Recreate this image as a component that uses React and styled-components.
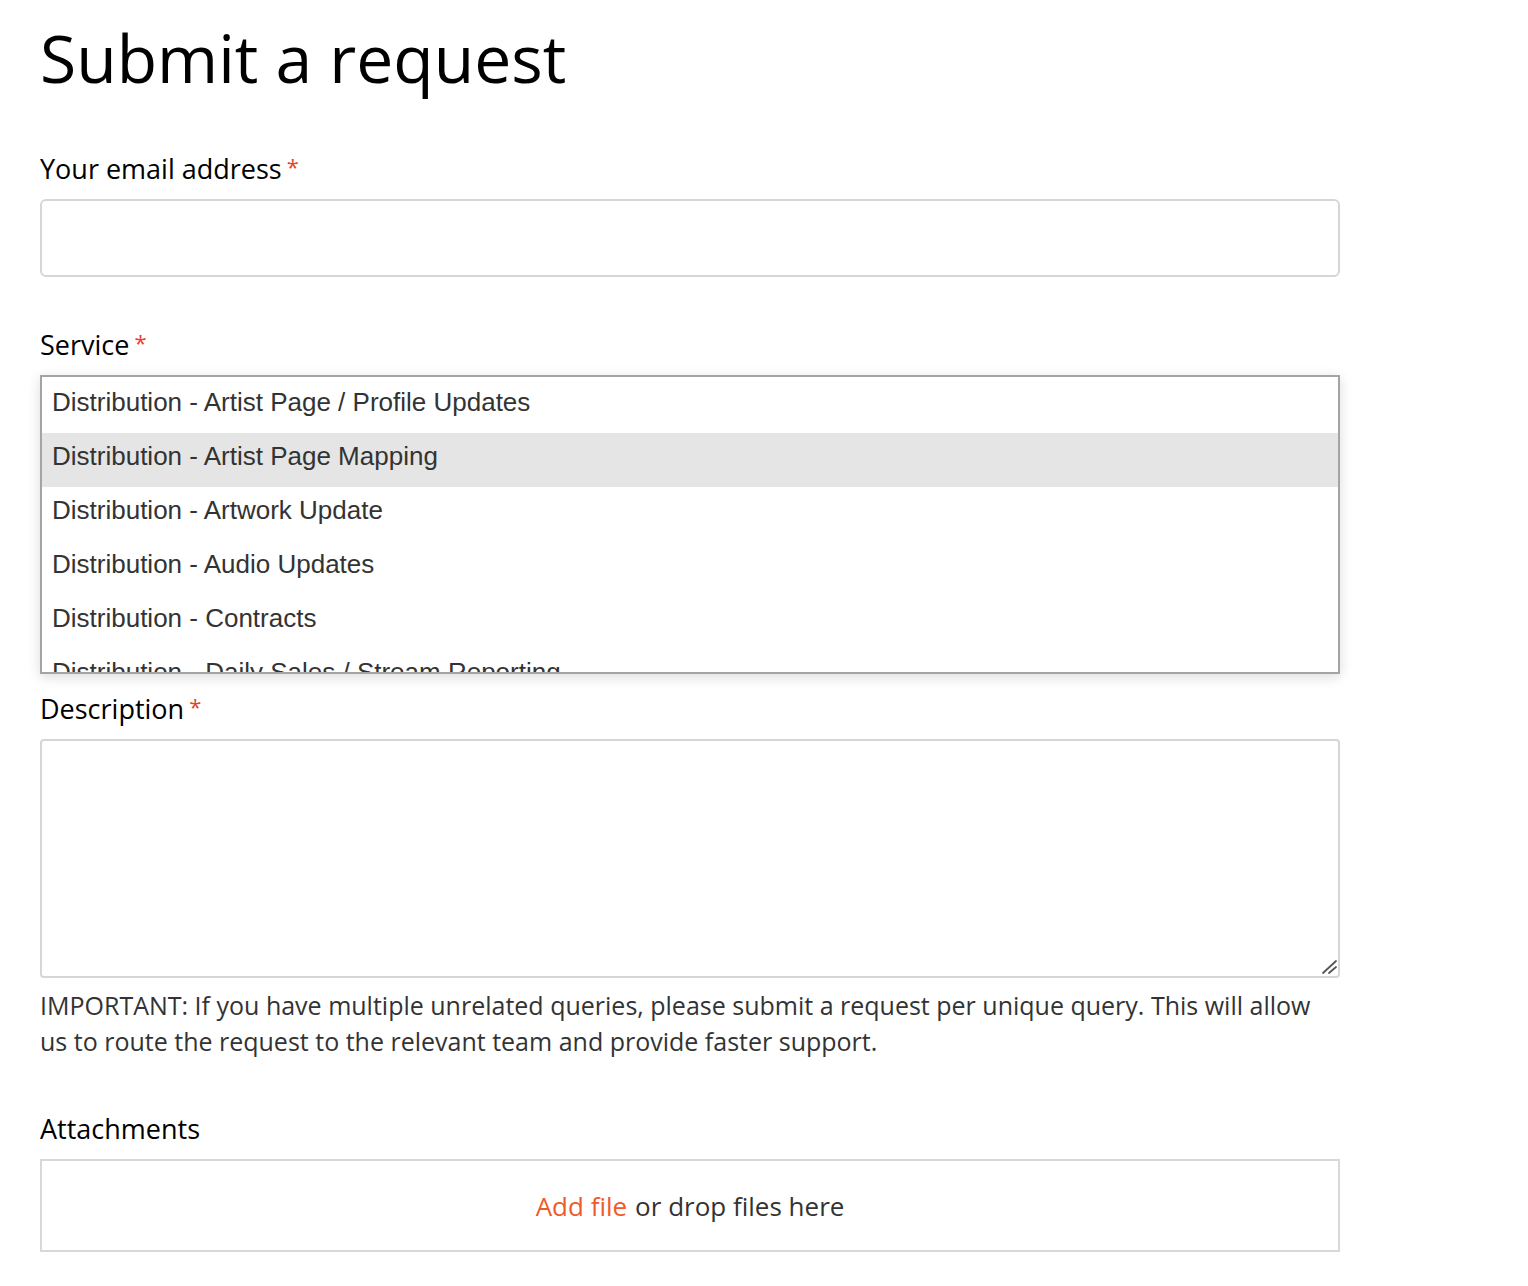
import React from "react";
import styled, { createGlobalStyle } from "styled-components";

const GlobalStyle = createGlobalStyle`
  html, body {
    margin: 0;
    padding: 0;
    background: #ffffff;
  }
  body {
    font-family: "Open Sans", "DejaVu Sans", sans-serif;
    color: #000;
  }
  * { box-sizing: border-box; }
`;

const Page = styled.main`
  padding: 17px 0 40px 40px;
  width: 1340px;
`;

const Title = styled.h1`
  margin: 0 0 51px;
  font-family: "Open Sans", sans-serif;
  font-weight: 400;
  font-size: 66px;
  line-height: 80px;
  color: #000;
`;

const Form = styled.form`
  display: flex;
  flex-direction: column;
  width: 1300px;
`;

const Field = styled.div`
  display: flex;
  flex-direction: column;
  margin-bottom: ${(p) => p.$gap ?? 50}px;
`;

const Label = styled.label`
  display: block;
  font-size: 27px;
  line-height: 36px;
  color: #000;
  margin-bottom: 12px;
`;

const Required = styled.span`
  color: #e8412e;
  font-size: 22px;
  margin-left: 5px;
  vertical-align: 4px;
`;

const TextInput = styled.input`
  display: block;
  width: 100%;
  height: 78px;
  border: 2px solid #d6d6d6;
  border-radius: 6px;
  background: #fff;
  font: inherit;
  font-size: 26px;
  padding: 0 16px;
  outline: none;
`;

const ListBox = styled.div`
  width: 100%;
  height: 299px;
  border: 2px solid #a4a4a4;
  background: #fff;
  padding-top: 2px;
  overflow: hidden;
  box-shadow: 0 3px 12px rgba(0, 0, 0, 0.14);
`;

const Option = styled.div`
  height: 54px;
  padding: 0 10px 8px;
  line-height: 46px;
  font-family: "Liberation Sans", Arial, sans-serif;
  font-size: 26px;
  color: #333;
  white-space: nowrap;
  background: ${(p) => (p.$active ? "#e5e5e5" : "transparent")};
`;

const AreaWrap = styled.div`
  position: relative;
  width: 100%;
`;

const TextArea = styled.textarea`
  display: block;
  width: 100%;
  height: 239px;
  border: 2px solid #d6d6d6;
  border-radius: 4px;
  background: #fff;
  font: inherit;
  font-size: 26px;
  padding: 12px 16px;
  resize: none;
  outline: none;
`;

const Grip = styled.svg`
  position: absolute;
  right: 2px;
  bottom: 3px;
  width: 18px;
  height: 18px;
  pointer-events: none;
`;

const Hint = styled.p`
  margin: 9px 0 0;
  font-size: 25px;
  line-height: 36px;
  color: #333;
`;

const DropZone = styled.div`
  display: flex;
  align-items: center;
  justify-content: center;
  height: 93px;
  border: 2px solid #d8d8d8;
  font-size: 26px;
  color: #333;
`;

const AddLink = styled.a`
  color: #f05a28;
  text-decoration: none;
  margin-right: 8px;
  cursor: pointer;
`;

const services = [
  "Distribution - Artist Page / Profile Updates",
  "Distribution - Artist Page Mapping",
  "Distribution - Artwork Update",
  "Distribution - Audio Updates",
  "Distribution - Contracts",
  "Distribution - Daily Sales / Stream Reporting",
];

export default function App() {
  return (
    <>
      <GlobalStyle />
      <Page>
        <Title>Submit a request</Title>
        <Form onSubmit={(e) => e.preventDefault()}>
          <Field $gap={47}>
            <Label htmlFor="email">
              Your email address<Required>*</Required>
            </Label>
            <TextInput id="email" type="email" />
          </Field>

          <Field $gap={14}>
            <Label>
              Service<Required>*</Required>
            </Label>
            <ListBox role="listbox">
              {services.map((s, i) => (
                <Option key={s} role="option" $active={i === 1}>
                  {s}
                </Option>
              ))}
            </ListBox>
          </Field>

          <Field $gap={52}>
            <Label htmlFor="desc">
              Description<Required>*</Required>
            </Label>
            <AreaWrap>
              <TextArea id="desc" />
              <Grip viewBox="0 0 18 18" aria-hidden="true">
                <line x1="3" y1="16" x2="16" y2="4" stroke="#555" strokeWidth="1.8" strokeLinecap="round" />
                <line x1="9" y1="16" x2="16" y2="10" stroke="#555" strokeWidth="1.8" strokeLinecap="round" />
              </Grip>
            </AreaWrap>
            <Hint>
              IMPORTANT: If you have multiple unrelated queries, please submit a
              request per unique query. This will allow us to route the request
              to the relevant team and provide faster support.
            </Hint>
          </Field>

          <Field $gap={0}>
            <Label>Attachments</Label>
            <DropZone>
              <AddLink>Add file</AddLink>or drop files here
            </DropZone>
          </Field>
        </Form>
      </Page>
    </>
  );
}
